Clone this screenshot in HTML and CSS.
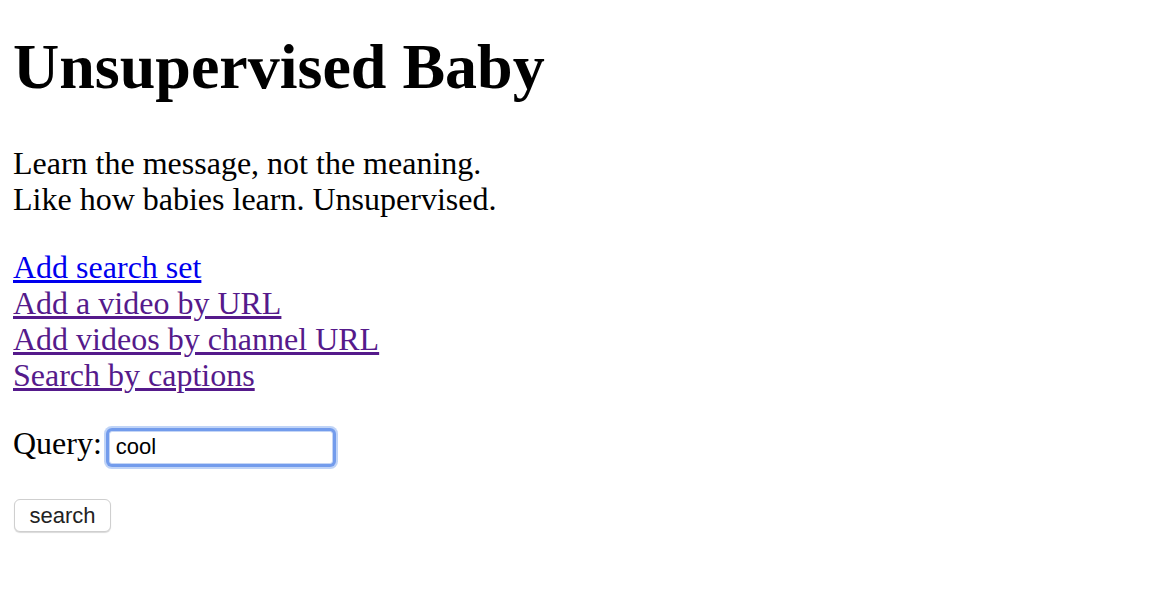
FILE: index.html
```html
<!DOCTYPE html>
<html lang="en">

<head>
    <meta charset="UTF-8">
    <meta name="viewport" content="width=device-width, initial-scale=1.0">
    <title>Unsupervised Baby</title>
    <link rel="stylesheet" href="styles.css">
</head>

<body>
    <h1>Unsupervised Baby</h1>

    <p>
        Learn the message, not the meaning.<br>
        Like how babies learn. Unsupervised.
    </p>

    <p>
        <a href="#" class="link">Add search set</a><br>
        <a href="#" class="link visited">Add a video by URL</a><br>
        <a href="#" class="link visited">Add videos by channel URL</a><br>
        <a href="#" class="link visited">Search by captions</a>
    </p>

    <form class="search-form" onsubmit="return false">
        <p class="query-row">
            <label for="query">Query:</label>
            <input type="text" id="query" class="query" value="cool" autofocus>
        </p>
        <p class="btn-row">
            <button type="submit" class="search-btn">search</button>
        </p>
    </form>
</body>

</html>
```
FILE: styles.css
```css
body {
    margin: 13px;
    font-family: "Liberation Serif", "Times New Roman", serif;
    font-size: 32px;
    line-height: 36px;
    color: #000;
    background: #fff;
}

h1 {
    font-size: 64px;
    line-height: 74px;
    margin: 17px 0 41px 0;
}

p {
    margin: 32px 0;
}

.link {
    color: #0000ee;
}

.visited {
    color: #551a8b;
}

.search-form {
    margin: 0;
}

.query-row {
    margin-bottom: 30px;
}

.btn-row {
    margin-top: 30px;
}

.query {
    box-sizing: border-box;
    width: 224px;
    height: 33px;
    margin-left: -1px;
    padding: 0 6px;
    font-family: "Liberation Sans", Arial, sans-serif;
    font-size: 22px;
    color: #000;
    border: 1px solid #c4d5f5;
    border-radius: 3px;
    outline: none;
    box-shadow: 0 0 0 3px #739cec, 0 0 0 5px rgba(130, 170, 240, 0.5);
    caret-color: #000;
}

.search-btn {
    box-sizing: border-box;
    width: 97px;
    height: 33px;
    margin-left: 1px;
    padding: 0;
    font-family: "Liberation Sans", Arial, sans-serif;
    font-size: 22px;
    color: #222;
    background: #fff;
    border: 1px solid #cfcfcf;
    border-radius: 6px;
    box-shadow: 0 1px 1px rgba(0, 0, 0, 0.15);
}
```
